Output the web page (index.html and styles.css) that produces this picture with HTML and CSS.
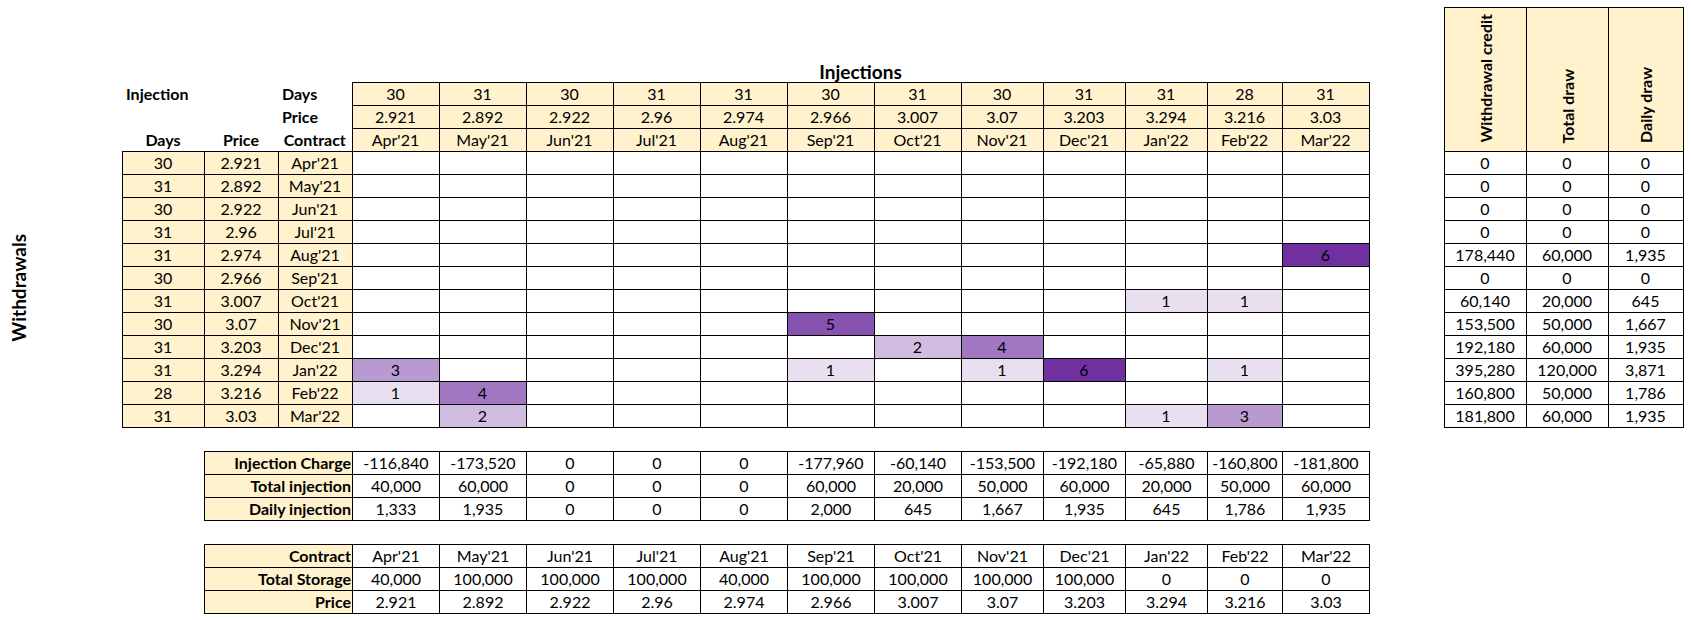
FILE: index.html
```html
<!DOCTYPE html>
<html lang="en">
<head>
<meta charset="utf-8">
<title>Storage schedule</title>
<link rel="stylesheet" href="styles.css">
</head>
<body>
<div class="page">
  <div class="top">
    <table class="sheet main">
      <colgroup>
        <col class="w-side"><col class="w82"><col class="w74"><col class="w74">
        <col class="w87"><col class="w87"><col class="w87"><col class="w87"><col class="w87"><col class="w87"><col class="w87">
        <col class="w82"><col class="w82"><col class="w82"><col class="w75"><col class="w87">
      </colgroup>
      <tr class="title-row">
        <td></td><td></td><td></td><td></td>
        <td colspan="12" class="title">Injections</td>
      </tr>
      <tr>
        <td></td><td class="lbl left">Injection</td><td></td><td class="lbl left">Days</td>
        <td class="c y">30</td><td class="c y">31</td><td class="c y">30</td><td class="c y">31</td><td class="c y">31</td><td class="c y">30</td><td class="c y">31</td><td class="c y">30</td><td class="c y">31</td><td class="c y">31</td><td class="c y">28</td><td class="c y">31</td>
      </tr>
      <tr>
        <td></td><td></td><td></td><td class="lbl left">Price</td>
        <td class="c y">2.921</td><td class="c y">2.892</td><td class="c y">2.922</td><td class="c y">2.96</td><td class="c y">2.974</td><td class="c y">2.966</td><td class="c y">3.007</td><td class="c y">3.07</td><td class="c y">3.203</td><td class="c y">3.294</td><td class="c y">3.216</td><td class="c y">3.03</td>
      </tr>
      <tr>
        <td></td><td class="lbl">Days</td><td class="lbl">Price</td><td class="lbl">Contract</td>
        <td class="c y">Apr'21</td><td class="c y">May'21</td><td class="c y">Jun'21</td><td class="c y">Jul'21</td><td class="c y">Aug'21</td><td class="c y">Sep'21</td><td class="c y">Oct'21</td><td class="c y">Nov'21</td><td class="c y">Dec'21</td><td class="c y">Jan'22</td><td class="c y">Feb'22</td><td class="c y">Mar'22</td>
      </tr>
      <tr>
        <td rowspan="12" class="side"><span class="vtext">Withdrawals</span></td>
        <td class="c y">30</td><td class="c y">2.921</td><td class="c y">Apr'21</td>
        <td class="c"></td><td class="c"></td><td class="c"></td><td class="c"></td><td class="c"></td><td class="c"></td><td class="c"></td><td class="c"></td><td class="c"></td><td class="c"></td><td class="c"></td><td class="c"></td>
      </tr>
      <tr>
        <td class="c y">31</td><td class="c y">2.892</td><td class="c y">May'21</td>
        <td class="c"></td><td class="c"></td><td class="c"></td><td class="c"></td><td class="c"></td><td class="c"></td><td class="c"></td><td class="c"></td><td class="c"></td><td class="c"></td><td class="c"></td><td class="c"></td>
      </tr>
      <tr>
        <td class="c y">30</td><td class="c y">2.922</td><td class="c y">Jun'21</td>
        <td class="c"></td><td class="c"></td><td class="c"></td><td class="c"></td><td class="c"></td><td class="c"></td><td class="c"></td><td class="c"></td><td class="c"></td><td class="c"></td><td class="c"></td><td class="c"></td>
      </tr>
      <tr>
        <td class="c y">31</td><td class="c y">2.96</td><td class="c y">Jul'21</td>
        <td class="c"></td><td class="c"></td><td class="c"></td><td class="c"></td><td class="c"></td><td class="c"></td><td class="c"></td><td class="c"></td><td class="c"></td><td class="c"></td><td class="c"></td><td class="c"></td>
      </tr>
      <tr>
        <td class="c y">31</td><td class="c y">2.974</td><td class="c y">Aug'21</td>
        <td class="c"></td><td class="c"></td><td class="c"></td><td class="c"></td><td class="c"></td><td class="c"></td><td class="c"></td><td class="c"></td><td class="c"></td><td class="c"></td><td class="c"></td><td class="c p6">6</td>
      </tr>
      <tr>
        <td class="c y">30</td><td class="c y">2.966</td><td class="c y">Sep'21</td>
        <td class="c"></td><td class="c"></td><td class="c"></td><td class="c"></td><td class="c"></td><td class="c"></td><td class="c"></td><td class="c"></td><td class="c"></td><td class="c"></td><td class="c"></td><td class="c"></td>
      </tr>
      <tr>
        <td class="c y">31</td><td class="c y">3.007</td><td class="c y">Oct'21</td>
        <td class="c"></td><td class="c"></td><td class="c"></td><td class="c"></td><td class="c"></td><td class="c"></td><td class="c"></td><td class="c"></td><td class="c"></td><td class="c p1">1</td><td class="c p1">1</td><td class="c"></td>
      </tr>
      <tr>
        <td class="c y">30</td><td class="c y">3.07</td><td class="c y">Nov'21</td>
        <td class="c"></td><td class="c"></td><td class="c"></td><td class="c"></td><td class="c"></td><td class="c p5">5</td><td class="c"></td><td class="c"></td><td class="c"></td><td class="c"></td><td class="c"></td><td class="c"></td>
      </tr>
      <tr>
        <td class="c y">31</td><td class="c y">3.203</td><td class="c y">Dec'21</td>
        <td class="c"></td><td class="c"></td><td class="c"></td><td class="c"></td><td class="c"></td><td class="c"></td><td class="c p2">2</td><td class="c p4">4</td><td class="c"></td><td class="c"></td><td class="c"></td><td class="c"></td>
      </tr>
      <tr>
        <td class="c y">31</td><td class="c y">3.294</td><td class="c y">Jan'22</td>
        <td class="c p3">3</td><td class="c"></td><td class="c"></td><td class="c"></td><td class="c"></td><td class="c p1">1</td><td class="c"></td><td class="c p1">1</td><td class="c p6">6</td><td class="c"></td><td class="c p1">1</td><td class="c"></td>
      </tr>
      <tr>
        <td class="c y">28</td><td class="c y">3.216</td><td class="c y">Feb'22</td>
        <td class="c p1">1</td><td class="c p4">4</td><td class="c"></td><td class="c"></td><td class="c"></td><td class="c"></td><td class="c"></td><td class="c"></td><td class="c"></td><td class="c"></td><td class="c"></td><td class="c"></td>
      </tr>
      <tr>
        <td class="c y">31</td><td class="c y">3.03</td><td class="c y">Mar'22</td>
        <td class="c"></td><td class="c p2">2</td><td class="c"></td><td class="c"></td><td class="c"></td><td class="c"></td><td class="c"></td><td class="c"></td><td class="c"></td><td class="c p1">1</td><td class="c p3">3</td><td class="c"></td>
      </tr>
    </table>

    <table class="sheet draws">
      <colgroup><col class="w82"><col class="w82"><col class="w75"></colgroup>
      <tr class="head-row">
        <td class="c y vhead"><span class="vtext small">Withdrawal credit</span></td>
        <td class="c y vhead"><span class="vtext small">Total draw</span></td>
        <td class="c y vhead"><span class="vtext small">Daily draw</span></td>
      </tr>
      <tr><td class="c">0</td><td class="c">0</td><td class="c">0</td></tr>
      <tr><td class="c">0</td><td class="c">0</td><td class="c">0</td></tr>
      <tr><td class="c">0</td><td class="c">0</td><td class="c">0</td></tr>
      <tr><td class="c">0</td><td class="c">0</td><td class="c">0</td></tr>
      <tr><td class="c">178,440</td><td class="c">60,000</td><td class="c">1,935</td></tr>
      <tr><td class="c">0</td><td class="c">0</td><td class="c">0</td></tr>
      <tr><td class="c">60,140</td><td class="c">20,000</td><td class="c">645</td></tr>
      <tr><td class="c">153,500</td><td class="c">50,000</td><td class="c">1,667</td></tr>
      <tr><td class="c">192,180</td><td class="c">60,000</td><td class="c">1,935</td></tr>
      <tr><td class="c">395,280</td><td class="c">120,000</td><td class="c">3,871</td></tr>
      <tr><td class="c">160,800</td><td class="c">50,000</td><td class="c">1,786</td></tr>
      <tr><td class="c">181,800</td><td class="c">60,000</td><td class="c">1,935</td></tr>
    </table>
  </div>

  <table class="sheet summary">
    <colgroup>
      <col class="w148">
      <col class="w87"><col class="w87"><col class="w87"><col class="w87"><col class="w87"><col class="w87"><col class="w87">
      <col class="w82"><col class="w82"><col class="w82"><col class="w75"><col class="w87">
    </colgroup>
    <tr>
      <td class="c y rlbl">Injection Charge</td>
      <td class="c">-116,840</td><td class="c">-173,520</td><td class="c">0</td><td class="c">0</td><td class="c">0</td><td class="c">-177,960</td><td class="c">-60,140</td><td class="c">-153,500</td><td class="c">-192,180</td><td class="c">-65,880</td><td class="c">-160,800</td><td class="c">-181,800</td>
    </tr>
    <tr>
      <td class="c y rlbl">Total injection</td>
      <td class="c">40,000</td><td class="c">60,000</td><td class="c">0</td><td class="c">0</td><td class="c">0</td><td class="c">60,000</td><td class="c">20,000</td><td class="c">50,000</td><td class="c">60,000</td><td class="c">20,000</td><td class="c">50,000</td><td class="c">60,000</td>
    </tr>
    <tr>
      <td class="c y rlbl">Daily injection</td>
      <td class="c">1,333</td><td class="c">1,935</td><td class="c">0</td><td class="c">0</td><td class="c">0</td><td class="c">2,000</td><td class="c">645</td><td class="c">1,667</td><td class="c">1,935</td><td class="c">645</td><td class="c">1,786</td><td class="c">1,935</td>
    </tr>
  </table>

  <table class="sheet summary">
    <colgroup>
      <col class="w148">
      <col class="w87"><col class="w87"><col class="w87"><col class="w87"><col class="w87"><col class="w87"><col class="w87">
      <col class="w82"><col class="w82"><col class="w82"><col class="w75"><col class="w87">
    </colgroup>
    <tr>
      <td class="c y rlbl">Contract</td>
      <td class="c">Apr'21</td><td class="c">May'21</td><td class="c">Jun'21</td><td class="c">Jul'21</td><td class="c">Aug'21</td><td class="c">Sep'21</td><td class="c">Oct'21</td><td class="c">Nov'21</td><td class="c">Dec'21</td><td class="c">Jan'22</td><td class="c">Feb'22</td><td class="c">Mar'22</td>
    </tr>
    <tr>
      <td class="c y rlbl">Total Storage</td>
      <td class="c">40,000</td><td class="c">100,000</td><td class="c">100,000</td><td class="c">100,000</td><td class="c">40,000</td><td class="c">100,000</td><td class="c">100,000</td><td class="c">100,000</td><td class="c">100,000</td><td class="c">0</td><td class="c">0</td><td class="c">0</td>
    </tr>
    <tr>
      <td class="c y rlbl">Price</td>
      <td class="c">2.921</td><td class="c">2.892</td><td class="c">2.922</td><td class="c">2.96</td><td class="c">2.974</td><td class="c">2.966</td><td class="c">3.007</td><td class="c">3.07</td><td class="c">3.203</td><td class="c">3.294</td><td class="c">3.216</td><td class="c">3.03</td>
    </tr>
  </table>
</div>
</body>
</html>
```
FILE: styles.css
```css
html, body {
  margin: 0;
  padding: 0;
  background: #ffffff;
}

body {
  font-family: Lato, "Liberation Sans", "DejaVu Sans", sans-serif;
  font-size: 16px;
  color: #000000;
}

.page {
  display: flex;
  flex-direction: column;
  align-items: flex-start;
  padding-top: 7px;
}

.top {
  display: flex;
  align-items: flex-end;
}

.sheet {
  border-collapse: collapse;
  table-layout: fixed;
}

.sheet tr {
  height: 23px;
}

.sheet td {
  padding: 0 2px 0;
  line-height: 18px;
  vertical-align: middle;
  text-align: center;
  white-space: nowrap;
  overflow: hidden;
}

.w-side { width: 122px; }
.w148 { width: 148px; }
.w87 { width: 87px; }
.w82 { width: 82px; }
.w75 { width: 75px; }
.w74 { width: 74px; }

.c {
  border: 1px solid #000000;
}

.y {
  background: #fff2cc;
}

.lbl {
  font-weight: bold;
}

.left {
  text-align: left !important;
  padding-left: 4px !important;
}

.rlbl {
  font-weight: bold;
  text-align: right !important;
  padding-right: 1px !important;
}

.title {
  font-weight: bold;
  font-size: 19px;
  line-height: 19px !important;
  vertical-align: top !important;
  padding-top: 2px !important;
}

.side {
  text-align: left !important;
  padding-left: 7px !important;
  vertical-align: middle;
}

.vtext {
  display: inline-block;
  writing-mode: vertical-rl;
  transform: rotate(180deg);
  font-weight: bold;
  font-size: 19px;
  line-height: 23px;
  white-space: nowrap;
}

.vtext.small {
  font-size: 16px;
  line-height: 19px;
}

.draws {
  margin-left: 74px;
}

.draws .head-row {
  height: 144px;
}

.vhead {
  vertical-align: bottom !important;
  padding-bottom: 5px !important;
}

.summary {
  margin-left: 204px;
  margin-top: 23px;
}

.p1 { background: #e8e0f0; }
.p2 { background: #d0bde0; }
.p3 { background: #b89ad0; }
.p4 { background: #a077c0; }
.p5 { background: #8853b0; }
.p6 { background: #7030a0; }
```
